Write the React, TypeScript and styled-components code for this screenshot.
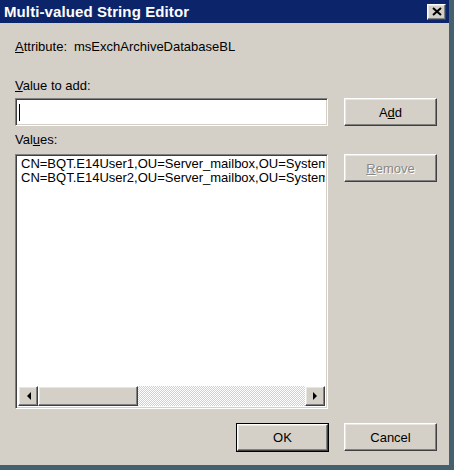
import React from "react";
import styled, { createGlobalStyle, css } from "styled-components";

const GlobalStyle = createGlobalStyle`
  html, body {
    margin: 0;
    padding: 0;
    background: #d4d0c8;
  }
  body {
    font-family: "Liberation Sans", Arial, sans-serif;
    font-size: 13px;
    color: #000;
  }
`;

const Window = styled.div`
  box-sizing: border-box;
  width: 454px;
  height: 470px;
  display: flex;
  flex-direction: column;
  background: #d4d0c8;
  border-right: 5px solid #45606f;
  border-bottom: 5px solid #45606f;
`;

const TitleBar = styled.div`
  height: 23px;
  flex: none;
  display: flex;
  align-items: center;
  justify-content: space-between;
  background: #0c256a;
  padding: 0 3px 0 4px;
`;

const TitleText = styled.span`
  color: #fff;
  font-weight: bold;
  font-size: 15px;
  line-height: 23px;
  letter-spacing: 0.1px;
`;

const raised = css`
  box-sizing: border-box;
  background: #d4d0c8;
  border: 1px solid;
  border-color: #fff #404040 #404040 #fff;
  box-shadow: inset -1px -1px 0 #808080, inset 1px 1px 0 #e8e6e2;
`;

const sunken = css`
  box-sizing: border-box;
  border: 1px solid;
  border-color: #808080 #fff #fff #808080;
  box-shadow: inset 1px 1px 0 #404040, inset -1px -1px 0 #d4d0c8;
`;

const CloseButton = styled.div`
  ${raised};
  width: 19px;
  height: 16px;
  display: flex;
  align-items: center;
  justify-content: center;
`;

const Body = styled.div`
  flex: 1;
  display: flex;
  flex-direction: column;
  padding: 16px 12px 0 15px;
`;

const Label = styled.div<{ $top: number }>`
  line-height: 15px;
  margin-top: ${(p) => p.$top}px;
  white-space: nowrap;
`;

const AttrValue = styled.span`
  margin-left: 7px;
`;

const Mn = styled.span`
  text-decoration: underline;
  text-underline-offset: 1px;
`;

const Row = styled.div<{ $top: number }>`
  display: flex;
  align-items: flex-start;
  gap: 16px;
  margin-top: ${(p) => p.$top}px;
`;

const TextBox = styled.div`
  ${sunken};
  width: 313px;
  height: 28px;
  background: #fff;
  display: flex;
  align-items: center;
  padding-left: 3px;
`;

const Caret = styled.span`
  width: 1px;
  height: 17px;
  background: #000;
`;

const Button = styled.div<{ $disabled?: boolean; $default?: boolean }>`
  ${raised};
  width: 93px;
  height: 28px;
  display: flex;
  align-items: center;
  justify-content: center;
  line-height: 15px;
  ${(p) =>
    p.$disabled &&
    css`
      color: #8a8884;
      text-shadow: 1px 1px 0 #fff;
    `}
  ${(p) =>
    p.$default &&
    css`
      outline: 1px solid #000;
      outline-offset: 0;
      width: 91px;
      height: 27px;
      margin: 1px 1px 0 0;
    `}
`;

const ListBox = styled.div`
  ${sunken};
  width: 313px;
  height: 255px;
  background: #fff;
  display: flex;
  flex-direction: column;
  padding: 2px;
`;

const Items = styled.div`
  flex: 1;
  overflow: hidden;
  padding: 0 0 0 3px;
  line-height: 14px;
  white-space: nowrap;
`;

const Item = styled.div`
  height: 14px;
`;

const HScroll = styled.div`
  height: 20px;
  display: flex;
  flex: none;
`;

const ArrowButton = styled.div`
  ${raised};
  width: 20px;
  height: 20px;
  display: flex;
  align-items: center;
  justify-content: center;
`;

const Track = styled.div`
  flex: 1;
  display: flex;
  background-color: #fff;
  background-image: repeating-conic-gradient(#d4d0c8 0 25%, #fff 0 50%);
  background-size: 2px 2px;
`;

const Thumb = styled.div`
  ${raised};
  height: 20px;
`;

const Footer = styled.div`
  display: flex;
  justify-content: flex-end;
  align-items: flex-start;
  gap: 15px;
  margin-top: 14px;
`;

const Arrow = ({ dir }: { dir: "left" | "right" }) => (
  <svg width="5" height="8" viewBox="0 0 5 8">
    {dir === "left" ? (
      <polygon points="5,0 5,8 1,4" fill="#000" />
    ) : (
      <polygon points="0,0 0,8 4,4" fill="#000" />
    )}
  </svg>
);

const values = [
  "CN=BQT.E14User1,OU=Server_mailbox,OU=System",
  "CN=BQT.E14User2,OU=Server_mailbox,OU=System",
];

export default function App() {
  return (
    <>
      <GlobalStyle />
      <Window>
        <TitleBar>
          <TitleText>Multi-valued String Editor</TitleText>
          <CloseButton>
            <svg width="10" height="9" viewBox="0 0 10 9">
              <path d="M1 1 L9 8 M9 1 L1 8" stroke="#000" strokeWidth="2" />
            </svg>
          </CloseButton>
        </TitleBar>
        <Body>
          <Label $top={0}>
            <Mn>A</Mn>ttribute:<AttrValue>msExchArchiveDatabaseBL</AttrValue>
          </Label>
          <Label $top={24}>
            <Mn>V</Mn>alue to add:
          </Label>
          <Row $top={5}>
            <TextBox>
              <Caret />
            </TextBox>
            <Button>
              A<Mn>d</Mn>d
            </Button>
          </Row>
          <Label $top={6}>
            Val<Mn>u</Mn>es:
          </Label>
          <Row $top={7}>
            <ListBox>
              <Items>
                {values.map((v) => (
                  <Item key={v}>{v}</Item>
                ))}
              </Items>
              <HScroll>
                <ArrowButton>
                  <Arrow dir="left" />
                </ArrowButton>
                <Track>
                  <Thumb style={{ width: 100 }} />
                </Track>
                <ArrowButton>
                  <Arrow dir="right" />
                </ArrowButton>
              </HScroll>
            </ListBox>
            <Button $disabled>
              <Mn>R</Mn>emove
            </Button>
          </Row>
          <Footer>
            <Button $default>OK</Button>
            <Button>Cancel</Button>
          </Footer>
        </Body>
      </Window>
    </>
  );
}
